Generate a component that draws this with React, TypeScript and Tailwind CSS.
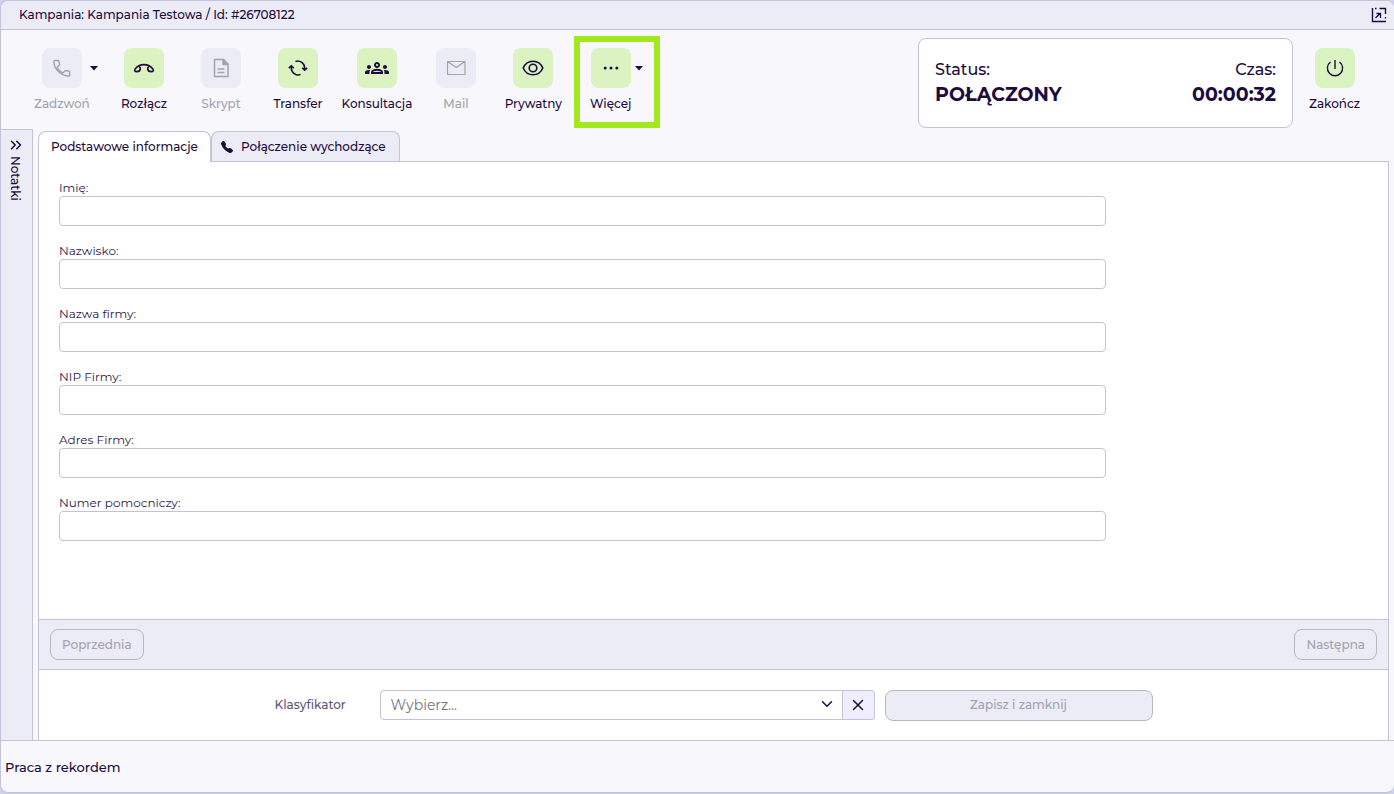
import React, { useState } from 'react';
import { MdOutlineGroups } from 'react-icons/md';
import { BsTelephoneFill } from 'react-icons/bs';
import { ChevronDown, ChevronsRight, X } from 'lucide-react';

type IconProps = { className?: string };

const CallIcon: React.FC<IconProps> = ({ className }) => (
    <svg className={className} viewBox="0 0 24 24" fill="none" stroke="currentColor" strokeWidth="1.4" strokeLinejoin="round">
        <path d="M4.600 4.500h3.600c.3 0 .5.2.6.5l.8 3.300c.1.300 0 .6-.2.800L7 11.300c1.300 2.500 3.300 4.500 5.800 5.800l2.300-2.400c.2-.2.5-.3.800-.2l3.200.7c.3.100.5.300.5.600v3.600c0 .4-.3.700-.7.700C11 20.100 3.900 13 3.900 5.200c0-.4.3-.7.700-.7z" />
    </svg>
);

const ScriptIcon: React.FC<IconProps> = ({ className }) => (
    <svg className={className} viewBox="0 0 24 24" fill="none" stroke="currentColor" strokeWidth="1.500" strokeLinejoin="round">
        <path d="M5.500 3.500h9l4.500 4.500V20.500h-13.500z" />
        <path d="M14 3.500v5h5z" fill="currentColor" />
        <path d="M8.500 13h7M8.500 16.500h7" />
    </svg>
);

const HangUpIcon: React.FC<IconProps> = ({ className }) => (
    <svg className={className} viewBox="0 0 24 24" fill="none" stroke="currentColor" strokeWidth="1.700" strokeLinejoin="round">
        <path d="M3 13.200C5.600 9.700 9 8.700 12 8.700s6.400 1 9 4.500" />
        <path d="M3 13.200c-.8 1.500 0 2.600 1.800 2.500 2-.1 3.500-1.200 3.500-3 0-1.100-.4-1.800-1.200-2.200" />
        <path d="M21 13.200c.8 1.500 0 2.600-1.800 2.500-2-.1-3.500-1.200-3.500-3 0-1.100.4-1.800 1.200-2.200" />
    </svg>
);

const TransferIcon: React.FC<IconProps> = ({ className }) => (
    <svg className={className} viewBox="0 0 24 24" fill="none" stroke="currentColor" strokeWidth="1.600">
        <path d="M9.500 5.400A7 7 0 0 1 18.700 12v1.800" />
        <path d="M16.200 11.800l2.500 2.300 2.500-2.300" />
        <path d="M14.500 18.600A7 7 0 0 1 5.300 12v-1.800" />
        <path d="M2.800 12.200l2.500-2.300 2.500 2.300" />
    </svg>
);

const MailIcon: React.FC<IconProps> = ({ className }) => (
    <svg className={className} viewBox="0 0 24 24" fill="none" stroke="currentColor" strokeWidth="1.200">
        <path d="M3.500 5.500h17.500v13H3.500z" />
        <path d="M3.500 5.500l8.750 6 8.750-6" />
    </svg>
);

const EyeIcon: React.FC<IconProps> = ({ className }) => (
    <svg className={className} viewBox="0 0 24 24" fill="none" stroke="currentColor" strokeWidth="1.600">
        <path d="M2.200 12C4 7.700 7.800 5.200 12 5.200s8 2.500 9.800 6.800c-1.800 4.300-5.600 6.800-9.800 6.800S4 16.300 2.200 12z" />
        <circle cx="12" cy="12" r="3.800" />
    </svg>
);

const MoreIcon: React.FC<IconProps> = ({ className }) => (
    <svg className={className} viewBox="0 0 24 24" fill="currentColor">
        <circle cx="6.200" cy="12" r="1.500" />
        <circle cx="12" cy="12" r="1.500" />
        <circle cx="17.800" cy="12" r="1.500" />
    </svg>
);

const PowerIcon: React.FC<IconProps> = ({ className }) => (
    <svg className={className} viewBox="0 0 24 24" fill="none" stroke="currentColor" strokeWidth="1.400">
        <path d="M12 4v9" />
        <path d="M7.500 6A7.600 7.600 0 1 0 16.500 6" />
    </svg>
);

const PopOutIcon: React.FC<IconProps> = ({ className }) => (
    <svg className={className} viewBox="0 0 16 16" fill="none" stroke="currentColor" strokeWidth="1.400">
        <path d="M1.500 1v13.500H15" />
        <path d="M4 1.500h1.500M8.500 1.500h6V7M14.500 10v1.500" />
        <path d="M4.500 11L9 6.500M5.500 6.500h4v4.500" />
    </svg>
);

interface ToolButtonProps {
    label: string;
    icon: React.FC<IconProps>;
    disabled?: boolean;
}

const ToolButton: React.FC<ToolButtonProps> = ({ label, icon: Icon, disabled }) => (
    <button
        type="button"
        disabled={disabled}
        className={`flex flex-col items-center gap-2 ${disabled ? 'text-[#a3a3ad]' : 'text-[#1d0b40]'}`}
    >
        <span className={`flex h-10 w-10 items-center justify-center rounded-lg ${disabled ? 'bg-[#ececf6]' : 'bg-[#daf3c0]'}`}>
            <Icon className="h-6 w-6" />
        </span>
        <span className="text-xs leading-4 font-medium">{label}</span>
    </button>
);

const MenuArrow: React.FC<{ label: string }> = ({ label }) => (
    <button type="button" aria-label={label} className="flex h-10 items-center text-[#1d0b40]">
        <svg className="h-2 w-2" viewBox="0 0 8 8" fill="currentColor">
            <path d="M0 2h8L4 6.500z" />
        </svg>
    </button>
);

const fields = [
    { id: 'firstName', label: 'Imię:' },
    { id: 'lastName', label: 'Nazwisko:' },
    { id: 'companyName', label: 'Nazwa firmy:' },
    { id: 'companyNip', label: 'NIP Firmy:' },
    { id: 'companyAddress', label: 'Adres Firmy:' },
    { id: 'extraNumber', label: 'Numer pomocniczy:' },
];

const App: React.FC = () => {
    const [values, setValues] = useState<Record<string, string>>({});
    const [classifier, setClassifier] = useState('');

    return (
        <div className="min-h-screen bg-[#cfd0ee] pb-px font-[Montserrat,Inter,sans-serif] text-[#1d0b40]">
            <div className="flex min-h-[calc(100vh-1px)] flex-col overflow-hidden rounded-lg border border-r-0 border-[#c3c2da] bg-[#f7f7fc]">
                <header className="flex h-[29px] items-center justify-between border-b border-[#c3c2da] bg-[#ececf6] pr-[7px] pl-[18px]">
                    <h1 className="text-xs leading-4 font-medium">Kampania: Kampania Testowa / Id: #26708122</h1>
                    <button type="button" aria-label="Otwórz w nowym oknie">
                        <PopOutIcon className="h-4 w-4" />
                    </button>
                </header>

                <div className="flex h-[99px] items-start justify-between pr-[34px]">
                    <div className="flex items-start pt-[6px]">
                        <div className="grid grid-cols-[120px_46px_108px_46px_112px_46px_95px] pt-3">
                            <div className="flex pl-[33px]">
                                <ToolButton label="Zadzwoń" icon={CallIcon} disabled />
                                <MenuArrow label="Opcje dzwonienia" />
                            </div>
                            <ToolButton label="Rozłącz" icon={HangUpIcon} />
                            <ToolButton label="Skrypt" icon={ScriptIcon} disabled />
                            <ToolButton label="Transfer" icon={TransferIcon} />
                            <ToolButton label="Konsultacja" icon={MdOutlineGroups} />
                            <ToolButton label="Mail" icon={MailIcon} disabled />
                            <div className="flex justify-end pr-3">
                                <ToolButton label="Prywatny" icon={EyeIcon} />
                            </div>
                        </div>
                        <div className="flex h-[92px] w-[86px] gap-1 border-[6px] border-[#a3e81c] pt-[6px] pl-[10px]">
                            <ToolButton label="Więcej" icon={MoreIcon} />
                            <MenuArrow label="Więcej opcji" />
                        </div>
                    </div>

                    <div className="flex items-start gap-4 pt-2">
                        <dl className="flex h-[90px] w-[375px] justify-between rounded-lg border border-[#c3c2da] bg-white px-4 pt-[18px]">
                            <div>
                                <dt className="text-base leading-[26px] font-medium">Status:</dt>
                                <dd className="text-[19px] leading-6 font-bold">POŁĄCZONY</dd>
                            </div>
                            <div className="text-right">
                                <dt className="text-base leading-[26px] font-medium">Czas:</dt>
                                <dd className="text-[19px] leading-6 font-bold">00:00:32</dd>
                            </div>
                        </dl>
                        <div className="pt-[10px]">
                            <ToolButton label="Zakończ" icon={PowerIcon} />
                        </div>
                    </div>
                </div>

                <div className="flex flex-1">
                    <aside className="w-8 border-t border-r border-[#c3c2da] bg-[#ececf6]">
                        <button type="button" className="flex w-full flex-col items-center gap-[2px] pt-[6px] pr-1">
                            <ChevronsRight className="ml-[3px] h-[18px] w-[18px]" strokeWidth={2} />
                            <span className="text-xs leading-4 font-medium [writing-mode:vertical-rl]">Notatki</span>
                        </button>
                    </aside>

                    <main className="mr-[5px] ml-[5px] flex flex-1 flex-col pt-[2px]">
                        <div role="tablist" className="flex h-[30px]">
                            <button
                                type="button"
                                role="tab"
                                aria-selected="true"
                                className="z-10 -mb-px w-[173px] rounded-t-lg border border-b-0 border-[#c3c2da] bg-white text-xs leading-4 font-medium"
                            >
                                Podstawowe informacje
                            </button>
                            <button
                                type="button"
                                role="tab"
                                aria-selected="false"
                                className="flex w-[189px] items-center gap-2 rounded-t-lg border border-b-0 border-[#c3c2da] bg-[#ececf6] pl-[9px] text-xs leading-4 font-medium"
                            >
                                <BsTelephoneFill className="h-3 w-3" />
                                Połączenie wychodzące
                            </button>
                        </div>

                        <section className="flex flex-1 flex-col border border-b-0 border-[#c3c2da] bg-white">
                            <form className="flex w-4/5 flex-1 flex-col gap-[17px] pt-[18px] pr-3 pl-5">
                                {fields.map(field => (
                                    <div key={field.id}>
                                        <label htmlFor={field.id} className="block text-xs leading-4 text-[#2a1a4c]">{field.label}</label>
                                        <input
                                            id={field.id}
                                            type="text"
                                            value={values[field.id] ?? ''}
                                            onChange={e => setValues({ ...values, [field.id]: e.target.value })}
                                            className="block h-[30px] w-full rounded border border-[#c3c2da] bg-white px-2 text-xs"
                                        />
                                    </div>
                                ))}
                            </form>

                            <div className="flex h-[51px] items-center justify-between border-y border-[#c3c2da] bg-[#ececf6] px-[11px]">
                                <button type="button" disabled className="h-[31px] rounded-lg border border-[#b8b8c0] px-[11px] text-xs font-medium text-[#a3a3ad]">
                                    Poprzednia
                                </button>
                                <button type="button" disabled className="h-[31px] rounded-lg border border-[#b8b8c0] px-[11px] text-xs font-medium text-[#a3a3ad]">
                                    Następna
                                </button>
                            </div>

                            <div className="flex h-[70px] items-center justify-center">
                                <label htmlFor="classifier" className="w-[105px] text-xs leading-4 font-medium text-[#5e5677]">Klasyfikator</label>
                                <div className="relative w-[463px]">
                                    <select
                                        id="classifier"
                                        value={classifier}
                                        onChange={e => setClassifier(e.target.value)}
                                        className="block h-[30px] w-full appearance-none rounded-l border border-[#c3c2da] bg-white px-[10px] text-sm text-[#75757c]"
                                    >
                                        <option value="">Wybierz...</option>
                                    </select>
                                    <ChevronDown className="pointer-events-none absolute top-[5px] right-[7px] h-[18px] w-[18px]" />
                                </div>
                                <button
                                    type="button"
                                    aria-label="Wyczyść"
                                    onClick={() => setClassifier('')}
                                    className="flex h-[30px] w-8 items-center justify-center rounded-r border border-l-0 border-[#c3c2da] bg-[#eeeefe]"
                                >
                                    <X className="h-[18px] w-[18px]" strokeWidth={2} />
                                </button>
                                <button type="button" disabled className="ml-[10px] h-[31px] w-[268px] rounded-lg border border-[#b8b8c0] bg-[#ececf6] text-xs font-medium text-[#a3a3ad]">
                                    Zapisz i zamknij
                                </button>
                            </div>
                        </section>
                    </main>
                </div>

                <footer className="flex h-[52px] items-center border-t border-[#c3c2da] px-1 text-[13px] leading-4 font-medium">
                    Praca z rekordem
                </footer>
            </div>
        </div>
    );
};

export default App;
